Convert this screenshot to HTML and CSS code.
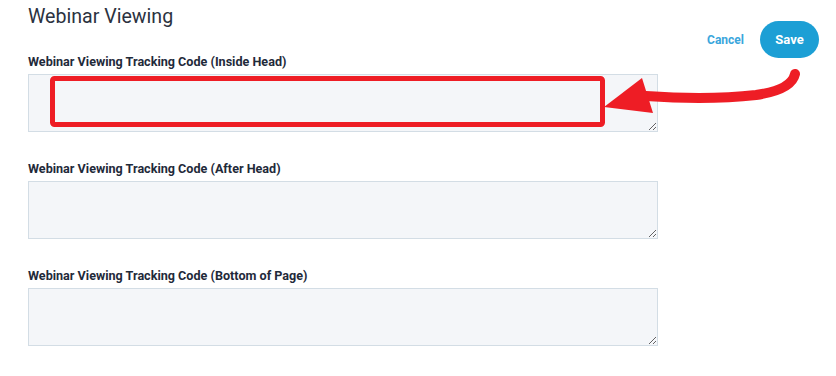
FILE: index.html
```html
<html lang="en">
<head>
  <meta charset="UTF-8">
  <title>Webinar Viewing</title>
  <link rel="stylesheet" href="styles.css">
</head>
<body>
  <div class="page">
    <div class="form">
      <h1>Webinar Viewing</h1>

      <div class="field">
        <label for="code_head">Webinar Viewing Tracking Code (Inside Head)</label>
        <textarea id="code_head"></textarea>
      </div>

      <div class="field">
        <label for="code_after">Webinar Viewing Tracking Code (After Head)</label>
        <textarea id="code_after"></textarea>
      </div>

      <div class="field">
        <label for="code_bottom">Webinar Viewing Tracking Code (Bottom of Page)</label>
        <textarea id="code_bottom"></textarea>
      </div>
    </div>

    <div class="actions">
      <a class="cancel" href="#">Cancel</a>
      <button class="save">Save</button>
    </div>

    <!-- annotation drawn over the page -->
    <svg class="markup" width="836" height="376" viewBox="0 0 836 376">
      <rect x="52.5" y="78.5" width="550" height="46" rx="2" fill="none" stroke="#ee1d25" stroke-width="5"/>
      <path d="M646 96 C690 99 720 99 756 95 C784 91 793 83 795 74" fill="none" stroke="#ee1d25" stroke-width="10" stroke-linecap="round"/>
      <polygon points="604,107 642,78 653,113" fill="#ee1d25"/>
    </svg>
  </div>
</body>
</html>
```

FILE: styles.css
```css
body {
  margin: 0;
  font-family: Roboto, "Liberation Sans", sans-serif;
  background: #fff;
  color: #1f2a3a;
}

.page {
  position: relative;
  display: flex;
  justify-content: space-between;
  align-items: flex-start;
  padding: 5px 17px 0 28px;
  height: 371px;
}

.form {
  width: 630px;
}

h1 {
  margin: 0 0 26px;
  font-size: 19.6px;
  font-weight: 400;
  line-height: 24px;
  color: #2b3240;
}

.field {
  margin-bottom: 30px;
}

.field label {
  display: block;
  font-size: 12.6px;
  font-weight: 700;
  line-height: 14px;
  margin-bottom: 5px;
  color: #1f2a3a;
}

.field textarea {
  display: block;
  box-sizing: border-box;
  width: 630px;
  height: 58px;
  margin: 0;
  background: #f4f6f9;
  border: 1px solid #d3dde5;
  border-radius: 0;
  outline: none;
}

.actions {
  display: flex;
  align-items: center;
  gap: 16px;
  margin-top: 16px;
}

.cancel {
  font-size: 12px;
  font-weight: 700;
  color: #3aa6dc;
  text-decoration: none;
}

.save {
  width: 59px;
  height: 37px;
  border: none;
  border-radius: 19px;
  background: #1c9fd5;
  color: #fff;
  font-family: Roboto, "Liberation Sans", sans-serif;
  font-size: 13px;
  font-weight: 700;
  padding: 0;
}

.markup {
  position: absolute;
  left: 0;
  top: 0;
  pointer-events: none;
}
```
